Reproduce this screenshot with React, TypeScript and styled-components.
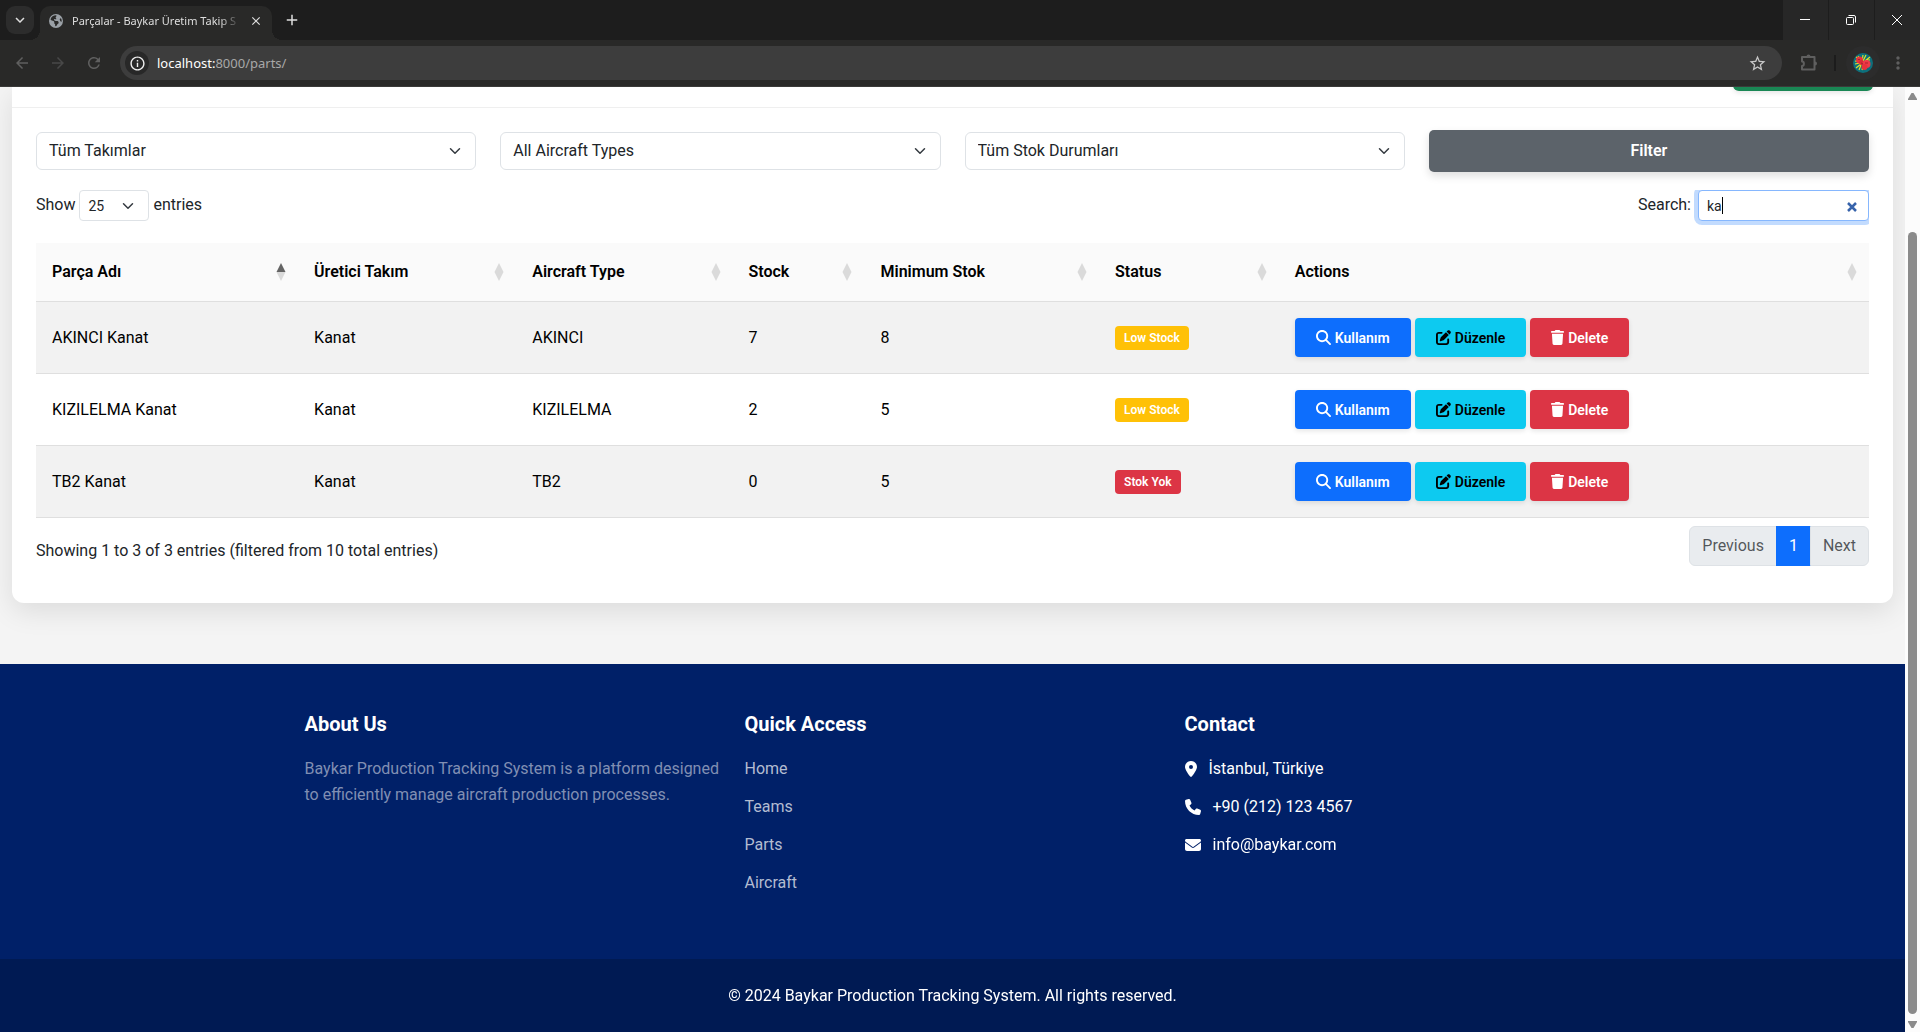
import React, { useEffect, useRef, useState } from 'react';
import styled, { createGlobalStyle, css } from 'styled-components';
import {
  FaMagnifyingGlass,
  FaPenToSquare,
  FaTrash,
  FaLocationDot,
  FaPhone,
  FaEnvelope,
  FaEarthAmericas,
} from 'react-icons/fa6';
import { MdClose, MdAdd, MdArrowBack, MdArrowForward, MdRefresh, MdStarBorder, MdMoreVert, MdKeyboardArrowDown, MdInfoOutline } from 'react-icons/md';

const Global = createGlobalStyle`
  *, *::before, *::after { box-sizing: border-box; }
  body {
    margin: 0;
    background: #f4f4f4;
    color: #212529;
    font: 400 16px/26px Roboto, sans-serif;
    overflow: hidden;
  }
  button, input, select { font: inherit; color: inherit; margin: 0; }
  ul { list-style: none; margin: 0; padding: 0; }
`;

const Window = styled.div`
  display: flex;
  flex-direction: column;
  height: 100vh;
`;

/* ---------- browser chrome ---------- */

const chromeFont = css`font-family: "Noto Sans", "Open Sans", sans-serif;`;

const TabStrip = styled.div`
  ${chromeFont}
  display: flex;
  flex: none;
  height: 40px;
  padding-left: 6px;
  background: #1d1d1d;
  color: #dedede;
`;

const PlainButton = styled.button`
  display: flex;
  align-items: center;
  justify-content: center;
  flex: none;
  border: 0;
  padding: 0;
  background: transparent;
`;

const TabSearch = styled(PlainButton)`
  width: 28px;
  height: 28px;
  margin: 6px 6px 0 0;
  border-radius: 9px;
  background: #2c2c2c;
  font-size: 18px;
`;

const Tab = styled.div`
  position: relative;
  display: flex;
  align-items: center;
  gap: 9px;
  width: 232px;
  height: 34px;
  margin-top: 6px;
  padding: 0 9px;
  padding-bottom: 5px;
  border-radius: 10px 10px 0 0;
  background: #292928;
  font-size: 11px;

  &::before, &::after {
    content: "";
    position: absolute;
    bottom: 0;
    width: 10px;
    height: 10px;
  }
  &::before {
    left: -10px;
    background: radial-gradient(circle at 0 0, transparent 10px, #292928 10px);
  }
  &::after {
    right: -10px;
    background: radial-gradient(circle at 100% 0, transparent 10px, #292928 10px);
  }
  > svg { flex: none; color: #9aa0a6; }
`;

const TabTitle = styled.span`
  flex: 1;
  line-height: 18px;
  white-space: nowrap;
  overflow: hidden;
  mask-image: linear-gradient(to right, #000 148px, transparent 168px);
`;

const NewTab = styled(PlainButton)`
  width: 28px;
  height: 28px;
  margin: 6px 0 0 6px;
  font-size: 18px;
`;

const WindowButtons = styled.div`
  display: flex;
  gap: 1px;
  margin-left: auto;
`;

const WindowButton = styled(PlainButton)`
  width: 45px;
  height: 40px;
  padding-right: 1px;
  background: #272727;
  color: #fff;
`;

const Toolbar = styled.div`
  ${chromeFont}
  display: flex;
  align-items: center;
  flex: none;
  height: 47px;
  padding: 0 4px;
  background: #292928;
  border-bottom: 1px solid #3a3a39;
  color: #5f5f5f;
`;

const NavButton = styled(PlainButton)`
  width: 36px;
  height: 34px;
  font-size: 18px;
  &:disabled { color: #484848; }
`;

const AddressBar = styled.div`
  display: flex;
  align-items: center;
  flex: 1;
  height: 34px;
  margin-left: 8px;
  padding: 0 15px 0 5px;
  border-radius: 17px;
  background: #3d3d3d;
  color: #c7c7c7;
`;

const SiteInfo = styled(PlainButton)`
  width: 24px;
  height: 24px;
  border-radius: 12px;
  background: #282828;
  color: #eeeeee;
  font-size: 17px;
`;

const Url = styled.div`
  flex: 1;
  padding-left: 8px;
  font-size: 13px;
  line-height: 20px;
  color: #a8a8a8;
  b { font-weight: 400; color: #fff; }
`;

const ToolIcons = styled.div`
  display: flex;
  align-items: center;
  margin-left: 9px;
`;

const Divider = styled.span`
  width: 2px;
  height: 16px;
  margin: 0 10px 0 7px;
  background: #1c1c1c;
`;

const Avatar = styled(PlainButton)`
  width: 34px;
  height: 34px;
  border-radius: 17px;
  background: #2c2c2c;
`;

/* ---------- viewport & scrollbar ---------- */

const Viewport = styled.div`
  display: flex;
  flex: 1;
  min-height: 0;
  overflow: hidden;
`;

const Page = styled.div`
  display: flex;
  flex-direction: column;
  flex: 1;
  min-width: 0;
`;

const Scrollbar = styled.div`
  display: flex;
  flex-direction: column;
  align-items: center;
  flex: none;
  width: 15px;
  padding: 5px 0 3px;
  background: #fcfcfc;
  color: #8b8b8b;
  svg { flex: none; display: block; }
`;

const Thumb = styled.span`
  flex: 1;
  width: 9px;
  margin: 132px 0 7px;
  border-radius: 5px;
  background: #8b8b8b;
`;

/* ---------- parts card ---------- */

const Main = styled.main`
  flex: 1;
  padding: 0 12px;
`;

const Card = styled.section`
  border-radius: 0 0 12px 12px;
  background: #fff;
  box-shadow: 0 8px 28px rgba(0, 0, 0, 0.1);
`;

const CardHeader = styled.header`
  display: flex;
  align-items: flex-end;
  justify-content: flex-end;
  height: 21px;
  padding: 0 20px 16px;
  border-bottom: 1px solid #efefef;
`;

const AddButton = styled.button`
  flex: none;
  width: 140px;
  height: 42px;
  border: 0;
  border-radius: 6px;
  background: #198754;
  box-shadow: 0 2px 5px rgba(0, 0, 0, 0.1);
`;

const CardBody = styled.div`
  padding: 22px 24px 37px;
`;

const Filters = styled.form`
  display: grid;
  grid-template-columns: repeat(4, 1fr);
  align-items: center;
  gap: 24px;
`;

const SelectBox = styled.span<{ $small?: boolean }>`
  display: grid;
  align-items: center;
  width: ${p => (p.$small ? '70px' : 'auto')};

  select, svg { grid-area: 1 / 1; }
  svg {
    justify-self: end;
    margin-right: 15px;
    pointer-events: none;
  }
`;

const Select = styled.select<{ $small?: boolean }>`
  appearance: none;
  width: 100%;
  height: ${p => (p.$small ? '31px' : '38px')};
  padding: ${p => (p.$small ? '0 8px 2px' : '0 12px')};
  border: 1px solid #dee2e6;
  border-radius: ${p => (p.$small ? '4px' : '6px')};
  background: #fff;
  font-size: ${p => (p.$small ? '14px' : '16px')};
`;

const FilterButton = styled.button`
  height: 42px;
  border: 0;
  border-radius: 5px;
  background: #5c636a;
  box-shadow: 0 4px 8px rgba(0, 0, 0, 0.13);
  color: #fff;
  font-weight: 600;
`;

const TableTools = styled.div`
  display: flex;
  align-items: flex-start;
  justify-content: space-between;
  height: 35px;
  margin-top: 18px;
`;

const LengthLabel = styled.label`
  display: flex;
  gap: 4px;
  line-height: 30px;
`;

const SearchLabel = styled.label`
  display: flex;
  line-height: 30px;
`;

const SearchClip = styled.span`
  overflow: hidden;
  padding: 0 0 4px 4px;
  margin-left: 3px;
  height: 35px;
`;

const SearchBox = styled.span`
  display: flex;
  align-items: center;
  width: 171px;
  height: 31px;
  padding: 0 11px 0 8px;
  border: 1px solid #86b7fe;
  border-radius: 4px;
  background: #fff;
  box-shadow: 0 0 0 4px rgba(13, 110, 253, 0.25);
`;

/* The field is as wide as its text, so the caret mark follows the last letter. */
const SearchInput = styled.input`
  field-sizing: content;
  max-width: 130px;
  height: 21px;
  padding: 0;
  border: 0;
  outline: 0;
  background: transparent;
  caret-color: transparent;
  font-size: 14px;
`;

const Caret = styled.span`
  flex: none;
  width: 1px;
  height: 17px;
  background: #000;
`;

const ClearButton = styled(PlainButton)`
  margin-left: auto;
  padding-top: 2px;
  color: #3763ab;
`;

const Table = styled.table`
  width: 100%;
  margin-top: 18px;
  border-collapse: separate;
  border-spacing: 0;
  table-layout: fixed;
  color: #000;
`;

const Col = styled.col<{ $share?: number }>`
  width: ${p => (p.$share ? `${p.$share}%` : 'auto')};
`;

const Th = styled.th`
  height: 59px;
  padding: 0 12px 0 16px;
  border-bottom: 1px solid #dfdfdf;
  background: #fafafa;
  font-weight: 600;
  text-align: left;
`;

const ThInner = styled.span`
  display: flex;
  align-items: center;
  justify-content: space-between;
`;

const Tr = styled.tr`
  &:nth-child(odd) td { background: #f2f2f2; }
`;

const Td = styled.td`
  height: 72px;
  padding: 0 16px;
  border-bottom: 1px solid #dfdfdf;
`;

const Badge = styled.span<{ $tone: 'low' | 'none' }>`
  display: inline-block;
  padding: 0 9px;
  border-radius: 4px;
  background: ${p => (p.$tone === 'low' ? '#ffc107' : '#dc3545')};
  color: #fff;
  font-size: 12px;
  font-weight: 600;
  line-height: 24px;
  vertical-align: middle;
`;

const Actions = styled.div`
  display: flex;
  gap: 4px;
`;

const tones = {
  primary: { bg: '#0d6efd', fg: '#fff' },
  info: { bg: '#0dcaf0', fg: '#000' },
  danger: { bg: '#dc3545', fg: '#fff' },
};

const ActionButton = styled.button<{ $tone: keyof typeof tones }>`
  display: flex;
  align-items: center;
  gap: 4px;
  height: 39px;
  padding: 0 21px;
  border: 0;
  border-radius: 4px;
  background: ${p => tones[p.$tone].bg};
  color: ${p => tones[p.$tone].fg};
  box-shadow: 0 2px 5px rgba(0, 0, 0, 0.1);
  font-size: 14px;
  font-weight: 600;
`;

const TableFooter = styled.div`
  display: flex;
  align-items: flex-start;
  justify-content: space-between;
  padding-top: 8px;
`;

const Info = styled.div`
  padding-top: 12px;
`;

const Pagination = styled.nav`
  display: flex;
`;

const PageButton = styled.button<{ $active?: boolean }>`
  height: 40px;
  padding: 0 12px;
  border: 1px solid ${p => (p.$active ? '#0d6efd' : '#dee2e6')};
  background: ${p => (p.$active ? '#0d6efd' : '#e9ecef')};
  color: ${p => (p.$active ? '#fff' : 'rgba(33, 37, 41, 0.75)')};

  & + & { margin-left: -1px; }
  &:first-child { border-radius: 6px 0 0 6px; }
  &:last-child { border-radius: 0 6px 6px 0; }
`;

/* ---------- footer ---------- */

const Footer = styled.footer`
  flex: none;
  background: #002068;
  color: #fff;
`;

const FooterGrid = styled.div`
  display: grid;
  grid-template-columns: repeat(3, 1fr);
  max-width: 1320px;
  margin: 0 auto;
  padding: 48px 0 63px;
`;

const FooterColumn = styled.section`
  padding: 0 12px;
`;

const FooterTitle = styled.h2`
  margin: 0 0 20px;
  font-size: 20px;
  font-weight: 700;
  line-height: 24px;
`;

const About = styled.p`
  margin: 0;
  color: #808fb3;
`;

const FooterList = styled.ul`
  display: grid;
  gap: 12px;
  li { display: flex; align-items: center; gap: 12px; }
`;

const FooterLink = styled.a`
  color: #b3bcd1;
  text-decoration: none;
`;

const Copyright = styled.div`
  padding: 24px 0 23px;
  background: #001a53;
  text-align: center;
`;

/* ---------- small drawings ---------- */

const TrashIcon = styled(FaTrash)`
  width: 13px;
  height: 15px;
`;

const PinIcon = styled(FaLocationDot)`
  width: 12px;
  height: 16px;
`;

const Chevron = () => (
  <svg width="12" height="12" viewBox="0 0 16 16" fill="none" stroke="#343a40" strokeWidth="2" strokeLinecap="round" strokeLinejoin="round">
    <path d="m2 5 6 6 6-6" />
  </svg>
);

const SortIcon = ({ active }: { active?: boolean }) => (
  <svg width="10" height="18" viewBox="0 0 10 18">
    <path d="M5 0 9.500 9h-9z" fill={active ? '#646464' : '#dadada'} />
    <path d="M.5 9h9L5 18z" fill="#dadada" />
  </svg>
);

const CrossIcon = () => (
  <svg width="10" height="10" viewBox="0 0 10 10" stroke="currentColor" strokeWidth="2.500">
    <path d="m1 1 8 8M9 1 1 9" />
  </svg>
);

const ScrollArrow = ({ down }: { down?: boolean }) => (
  <svg width="9" height="8" viewBox="0 0 9 8">
    <path d={down ? 'M0 0h9v1L5.500 7h-2L0 1z' : 'M0 8h9V7L5.500 1h-2L0 7z'} fill="currentColor" />
  </svg>
);

const PuzzleIcon = () => (
  <svg width="18" height="18" viewBox="0 0 18 18" fill="none" stroke="currentColor" strokeWidth="2">
    <path d="M2 3h12.500v12.500H2v-3.500c2.500 0 2.500-4.500 0-4.500z" strokeLinejoin="round" />
    <path d="M6.500 2.500a2 2 0 0 1 4 0zM15 7.500a2 2 0 0 1 0 4z" fill="currentColor" stroke="none" />
  </svg>
);

const AvatarIcon = () => (
  <svg width="20" height="20" viewBox="0 0 20 20">
    <circle cx="10" cy="10" r="10" fill="#0d6f7c" />
    <path d="M3 4l3 2M5 3l2 3M9 9l1-7M10 8l3-6M12 8l5-4M14 7l3 0M7 10l-5 1M8 11l-5 4M8 12l-2 5M10 13l-1 4M7 9l-5-1" stroke="#dfe22c" strokeWidth="1.200" />
    <circle cx="6.500" cy="7" r="3.500" fill="#e8323c" />
    <circle cx="8.500" cy="9.500" r="2.500" fill="#d92c38" />
    <circle cx="13.500" cy="11" r="4" fill="#f03a48" />
    <circle cx="11.500" cy="14" r="3" fill="#e8323c" />
    <path d="M5 6.500h2M12 10h3M8 10l2 1" stroke="#a8232f" />
  </svg>
);

const MinimizeIcon = () => (
  <svg width="10" height="10" viewBox="0 0 10 10" stroke="currentColor"><path d="M0 4.500h10" /></svg>
);
const RestoreIcon = () => (
  <svg width="10" height="10" viewBox="0 0 10 10" fill="none" stroke="currentColor">
    <rect x=".5" y="2.500" width="7" height="7" rx="1" />
    <path d="M2.500.5H8A1.500 1.500 0 0 1 9.500 2v5.500" />
  </svg>
);
const CloseIcon = () => (
  <svg width="10" height="10" viewBox="0 0 10 10" stroke="currentColor"><path d="m0 0 10 10M10 0 0 10" /></svg>
);

/* ---------- data ---------- */

const columns: { title: string; share?: number }[] = [
  { title: 'Parça Adı', share: 14.3 },
  { title: 'Üretici Takım', share: 11.9 },
  { title: 'Aircraft Type', share: 11.8 },
  { title: 'Stock', share: 7.2 },
  { title: 'Minimum Stok', share: 12.8 },
  { title: 'Status', share: 9.8 },
  { title: 'Actions' },
];

const parts = [
  { name: 'AKINCI Kanat', team: 'Kanat', aircraft: 'AKINCI', stock: 7, minimum: 8 },
  { name: 'KIZILELMA Kanat', team: 'Kanat', aircraft: 'KIZILELMA', stock: 2, minimum: 5 },
  { name: 'TB2 Kanat', team: 'Kanat', aircraft: 'TB2', stock: 0, minimum: 5 },
];

const filters = [
  { id: 'team', label: 'Takım', value: 'Tüm Takımlar' },
  { id: 'aircraft', label: 'Aircraft type', value: 'All Aircraft Types' },
  { id: 'stock', label: 'Stok durumu', value: 'Tüm Stok Durumları' },
];

const links = ['Home', 'Teams', 'Parts', 'Aircraft'];

const Browser = () => (
  <>
    <TabStrip>
      <TabSearch aria-label="Search tabs"><MdKeyboardArrowDown /></TabSearch>
      <Tab>
        <FaEarthAmericas size={14} />
        <TabTitle>Parçalar - Baykar Üretim Takip S</TabTitle>
        <PlainButton aria-label="Close tab"><MdClose size={14} /></PlainButton>
      </Tab>
      <NewTab aria-label="New tab"><MdAdd /></NewTab>
      <WindowButtons>
        <WindowButton aria-label="Minimize"><MinimizeIcon /></WindowButton>
        <WindowButton aria-label="Restore"><RestoreIcon /></WindowButton>
        <WindowButton aria-label="Close"><CloseIcon /></WindowButton>
      </WindowButtons>
    </TabStrip>
    <Toolbar>
      <NavButton aria-label="Back"><MdArrowBack /></NavButton>
      <NavButton aria-label="Forward" disabled><MdArrowForward /></NavButton>
      <NavButton aria-label="Reload"><MdRefresh /></NavButton>
      <AddressBar>
        <SiteInfo aria-label="Site information"><MdInfoOutline /></SiteInfo>
        <Url><b>localhost:</b>8000/parts/</Url>
        <PlainButton aria-label="Bookmark"><MdStarBorder size={19} /></PlainButton>
      </AddressBar>
      <ToolIcons>
        <NavButton aria-label="Extensions"><PuzzleIcon /></NavButton>
        <Divider />
        <Avatar aria-label="Profile"><AvatarIcon /></Avatar>
        <NavButton aria-label="Menu"><MdMoreVert size={20} /></NavButton>
      </ToolIcons>
    </Toolbar>
  </>
);

const PartsTable = () => (
  <Table>
    <colgroup>
      {columns.map(c => <Col key={c.title} $share={c.share} />)}
    </colgroup>
    <thead>
      <tr>
        {columns.map((c, i) => (
          <Th key={c.title} scope="col">
            <ThInner>{c.title}<SortIcon active={i === 0} /></ThInner>
          </Th>
        ))}
      </tr>
    </thead>
    <tbody>
      {parts.map(p => (
        <Tr key={p.name}>
          <Td>{p.name}</Td>
          <Td>{p.team}</Td>
          <Td>{p.aircraft}</Td>
          <Td>{p.stock}</Td>
          <Td>{p.minimum}</Td>
          <Td>
            <Badge $tone={p.stock ? 'low' : 'none'}>{p.stock ? 'Low Stock' : 'Stok Yok'}</Badge>
          </Td>
          <Td>
            <Actions>
              <ActionButton $tone="primary"><FaMagnifyingGlass size={15} />Kullanım</ActionButton>
              <ActionButton $tone="info"><FaPenToSquare size={15} />Düzenle</ActionButton>
              <ActionButton $tone="danger"><TrashIcon />Delete</ActionButton>
            </Actions>
          </Td>
        </Tr>
      ))}
    </tbody>
  </Table>
);

export default function App() {
  const [query, setQuery] = useState('ka');
  const input = useRef<HTMLInputElement>(null);
  useEffect(() => {
    input.current?.focus();
    input.current?.setSelectionRange(2, 2);
  }, []);

  return (
    <Window>
      <Global />
      <Browser />
      <Viewport>
        <Page>
          <Main>
            <Card>
              <CardHeader><AddButton aria-label="Add part" /></CardHeader>
              <CardBody>
                <Filters onSubmit={e => e.preventDefault()}>
                  {filters.map(f => (
                    <SelectBox key={f.id}>
                      <Select id={f.id} aria-label={f.label}><option>{f.value}</option></Select>
                      <Chevron />
                    </SelectBox>
                  ))}
                  <FilterButton>Filter</FilterButton>
                </Filters>
                <TableTools>
                  <LengthLabel>
                    Show
                    <SelectBox $small>
                      <Select $small><option>25</option></Select>
                      <Chevron />
                    </SelectBox>
                    entries
                  </LengthLabel>
                  <SearchLabel>
                    Search:
                    <SearchClip>
                      <SearchBox>
                        <SearchInput ref={input} value={query} onChange={e => setQuery(e.target.value)} />
                        <Caret />
                        <ClearButton type="button" aria-label="Clear search" onClick={() => setQuery('')}>
                          <CrossIcon />
                        </ClearButton>
                      </SearchBox>
                    </SearchClip>
                  </SearchLabel>
                </TableTools>
                <PartsTable />
                <TableFooter>
                  <Info>Showing 1 to 3 of 3 entries (filtered from 10 total entries)</Info>
                  <Pagination aria-label="Pages">
                    <PageButton disabled>Previous</PageButton>
                    <PageButton $active>1</PageButton>
                    <PageButton disabled>Next</PageButton>
                  </Pagination>
                </TableFooter>
              </CardBody>
            </Card>
          </Main>
          <Footer>
            <FooterGrid>
              <FooterColumn>
                <FooterTitle>About Us</FooterTitle>
                <About>Baykar Production Tracking System is a platform designed to efficiently manage aircraft production processes.</About>
              </FooterColumn>
              <FooterColumn>
                <FooterTitle>Quick Access</FooterTitle>
                <FooterList>
                  {links.map(l => <li key={l}><FooterLink href="#">{l}</FooterLink></li>)}
                </FooterList>
              </FooterColumn>
              <FooterColumn>
                <FooterTitle>Contact</FooterTitle>
                <FooterList>
                  <li><PinIcon />İstanbul, Türkiye</li>
                  <li><FaPhone />+90 (212) 123 4567</li>
                  <li><FaEnvelope />info@baykar.com</li>
                </FooterList>
              </FooterColumn>
            </FooterGrid>
            <Copyright>© 2024 Baykar Production Tracking System. All rights reserved.</Copyright>
          </Footer>
        </Page>
        <Scrollbar aria-hidden="true">
          <ScrollArrow />
          <Thumb />
          <ScrollArrow down />
        </Scrollbar>
      </Viewport>
    </Window>
  );
}
